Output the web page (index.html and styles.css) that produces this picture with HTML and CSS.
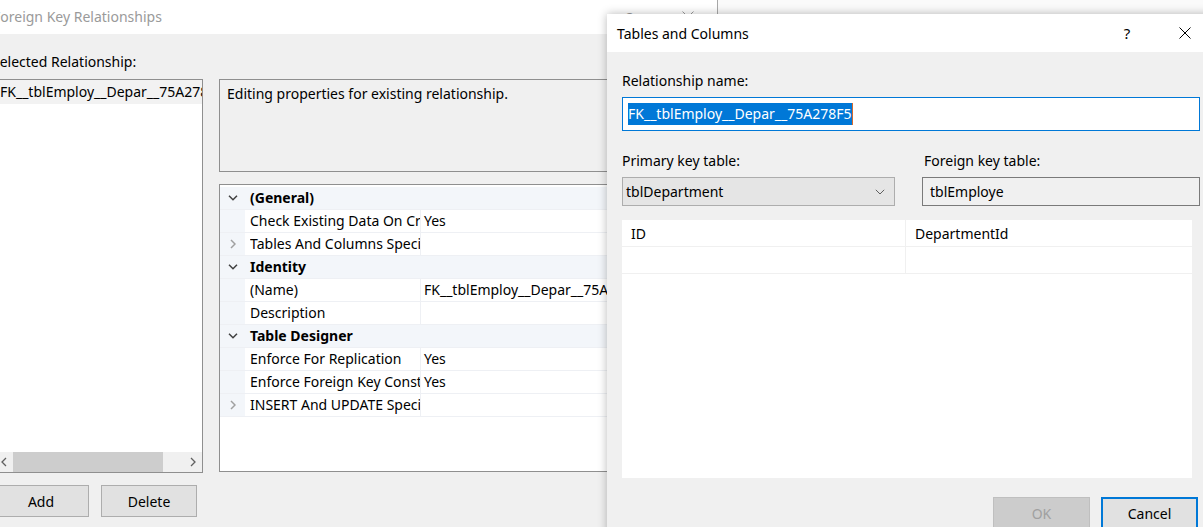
FILE: index.html
```html
<!DOCTYPE html>
<html>
<head>
<meta charset="utf-8">
<title>Foreign Key Relationships</title>
<link rel="stylesheet" href="styles.css">
</head>
<body>
<section class="win back">
  <header class="tb tb-back">
    <span class="tb-title">Foreign Key Relationships</span>
    <span class="capbtn">?</span>
    <span class="capbtn"><svg width="12" height="12" viewBox="0 0 12 12"><path d="M0.5 0.5L11.5 11.5M11.5 0.5L0.5 11.5" stroke="#9a9a9a" stroke-width="1" fill="none"/></svg></span>
  </header>
  <div class="back-body">
    <div class="lbl">Selected Relationship:</div>
    <div class="back-main">
      <div class="list">
        <div class="list-items">
          <div class="list-item">FK__tblEmploy__Depar__75A278F5</div>
        </div>
        <div class="hscroll">
          <span class="sarr"><svg width="6" height="10" viewBox="0 0 6 10"><path d="M5 1L1 5L5 9" stroke="#606060" stroke-width="1.3" fill="none"/></svg></span>
          <div class="track"><div class="thumb"></div></div>
          <span class="sarr"><svg width="6" height="10" viewBox="0 0 6 10"><path d="M1 1L5 5L1 9" stroke="#606060" stroke-width="1.3" fill="none"/></svg></span>
        </div>
      </div>
      <div class="rightcol">
        <div class="desc">Editing properties for existing relationship.</div>
        <div class="pgrid">
          <div class="prow cat"><span class="gut"><svg width="10" height="6" viewBox="0 0 10 6"><path d="M1 0.8L5 4.8L9 0.8" stroke="#404040" stroke-width="1.5" fill="none"/></svg></span><span class="pname">(General)</span></div>
          <div class="prow"><span class="gut"></span><span class="pname"><span class="clip">Check Existing Data On Creation Or Re-Enabling</span></span><span class="pval">Yes</span></div>
          <div class="prow"><span class="gut"><svg width="6" height="10" viewBox="0 0 6 10"><path d="M1 1L5 5L1 9" stroke="#a0a0a0" stroke-width="1.5" fill="none"/></svg></span><span class="pname"><span class="clip">Tables And Columns Specification</span></span><span class="pval"></span></div>
          <div class="prow cat"><span class="gut"><svg width="10" height="6" viewBox="0 0 10 6"><path d="M1 0.8L5 4.8L9 0.8" stroke="#404040" stroke-width="1.5" fill="none"/></svg></span><span class="pname">Identity</span></div>
          <div class="prow"><span class="gut"></span><span class="pname">(Name)</span><span class="pval">FK__tblEmploy__Depar__75A278F5</span></div>
          <div class="prow"><span class="gut"></span><span class="pname">Description</span><span class="pval"></span></div>
          <div class="prow cat"><span class="gut"><svg width="10" height="6" viewBox="0 0 10 6"><path d="M1 0.8L5 4.8L9 0.8" stroke="#404040" stroke-width="1.5" fill="none"/></svg></span><span class="pname">Table Designer</span></div>
          <div class="prow"><span class="gut"></span><span class="pname">Enforce For Replication</span><span class="pval">Yes</span></div>
          <div class="prow"><span class="gut"></span><span class="pname"><span class="clip">Enforce Foreign Key Constraint</span></span><span class="pval">Yes</span></div>
          <div class="prow"><span class="gut"><svg width="6" height="10" viewBox="0 0 6 10"><path d="M1 1L5 5L1 9" stroke="#a0a0a0" stroke-width="1.5" fill="none"/></svg></span><span class="pname"><span class="clip">INSERT And UPDATE Specification</span></span><span class="pval"></span></div>
        </div>
      </div>
    </div>
    <div class="btnrow">
      <button class="btn">Add</button>
      <button class="btn">Delete</button>
      <button class="btn btn-close">Close</button>
    </div>
  </div>
</section>

<section class="win front">
  <header class="tb tb-front">
    <span class="tb-title">Tables and Columns</span>
    <span class="capbtn">?</span>
    <span class="capbtn"><svg width="12" height="12" viewBox="0 0 12 12"><path d="M0.5 0.5L11.5 11.5M11.5 0.5L0.5 11.5" stroke="#000" stroke-width="1" fill="none"/></svg></span>
  </header>
  <div class="front-body">
    <div class="lbl">Relationship name:</div>
    <div class="namebox"><span class="seltext">FK__tblEmploy__Depar__75A278F5</span><span class="caret"></span></div>
    <div class="keys">
      <div class="lbl">Primary key table:</div>
      <div class="lbl">Foreign key table:</div>
      <div class="combo"><span>tblDepartment</span><svg width="10" height="6" viewBox="0 0 10 6"><path d="M0.8 0.8L5 5L9.2 0.8" stroke="#606060" stroke-width="1" fill="none"/></svg></div>
      <div class="rofield">tblEmploye</div>
    </div>
    <div class="cgrid">
      <div class="crow"><div class="ccell c1">ID</div><div class="ccell c2">DepartmentId</div></div>
      <div class="crow"><div class="ccell c1"></div><div class="ccell c2"></div></div>
    </div>
    <div class="fbtns">
      <button class="btn btn-ok">OK</button>
      <button class="btn btn-cancel">Cancel</button>
    </div>
  </div>
</section>
</body>
</html>
```

FILE: styles.css
```css
* { box-sizing: border-box; margin: 0; padding: 0; }
html, body { width: 1203px; height: 527px; overflow: hidden; }
body {
  background: #fafafa;
  font-family: "Noto Sans", "Segoe UI", sans-serif;
  font-size: 14px;
  color: #000;
  position: relative;
}
.win { position: absolute; background: #f0f0f0; }

/* caption bars */
.tb { display: flex; align-items: center; background: #fff; }
.tb-title { flex: 1; white-space: nowrap; font-size: 14px; }
.capbtn {
  width: 58px; height: 100%;
  display: flex; align-items: center; justify-content: center;
  font-size: 15px;
}

/* background window */
.back { left: -16px; top: 0; width: 734px; height: 540px; border-right: 1px solid #a8a8a8; }
.tb-back { height: 34px; padding-left: 9px; color: #9a9a9a; }
.tb-back .tb-title { padding-bottom: 2px; }
.back-body { padding: 19px 8px 0 8px; }
.lbl { height: 18px; line-height: 18px; white-space: nowrap; }
.back-main { display: flex; gap: 16px; margin-top: 8px; height: 394px; }
.list {
  margin-left: 2px; width: 209px; height: 394px;
  background: #fff; border: 1px solid #8f8f8f;
  display: flex; flex-direction: column;
}
.list-items { flex: 1; overflow: hidden; }
.list-item {
  height: 24px; line-height: 24px; padding-left: 5px;
  background: #f2f2f2; white-space: nowrap; overflow: hidden;
}
.hscroll { height: 20px; display: flex; align-items: center; background: #f0f0f0; }
.sarr { width: 18px; height: 20px; display: flex; align-items: center; justify-content: center; }
.track { flex: 1; height: 20px; display: flex; align-items: stretch; }
.thumb { width: 150px; background: #cdcdcd; }

.rightcol { flex: 1; display: flex; flex-direction: column; gap: 12px; }
.desc {
  height: 93px; border: 1px solid #8f8f8f;
  padding: 4px 7px; line-height: 20px; white-space: nowrap;
}
.pgrid {
  height: 288px; border: 1px solid #8f8f8f; background: #fff;
  padding-top: 2px; overflow: hidden;
}
.prow { display: flex; height: 23px; border-bottom: 1px solid #eef0f4; }
.prow .gut {
  width: 25px; flex: none; background: #f3f6fa;
  display: flex; align-items: center; justify-content: center;
}
.prow .pname {
  width: 176px; flex: none; padding-left: 5px; line-height: 22px;
  white-space: nowrap; overflow: hidden; border-right: 1px solid #eef0f4;
}
.prow .pname .clip { display: block; width: 170px; overflow: hidden; }
.prow .pval { flex: 1; padding-left: 3px; line-height: 22px; white-space: nowrap; overflow: hidden; }
.prow.cat { background: #f3f6fa; }
.prow.cat .pname { font-weight: bold; border-right: none; }

.btnrow { display: flex; gap: 12px; margin-top: 12px; padding-left: 1px; }
.btn {
  font-family: inherit; font-size: 14px; color: #000;
  height: 32px; width: 96px;
  background: #e1e1e1; border: 1px solid #adadad;
}
.btn-close { margin-left: 400px; margin-top: 8px; }

/* front window */
.front {
  left: 607px; top: 14px; width: 607px; height: 530px;
  box-shadow: 0 0 9px rgba(0,0,0,0.28);
}
.tb-front { height: 38px; padding-left: 10px; }
.front-body { padding: 20px 14px 0 15px; }
.namebox {
  margin-top: 7px; height: 34px; border: 1px solid #0078d7; background: #fff;
  display: flex; align-items: center; padding-left: 5px;
}
.seltext { background: #0078d7; color: #fff; font-size: 14px; line-height: 22px; white-space: nowrap; }
.caret { width: 1px; height: 22px; background: #d86a2c; }
.keys {
  margin-top: 21px;
  display: grid; grid-template-columns: 273px 1fr; column-gap: 27px; row-gap: 7px;
}
.keys .lbl:nth-child(2) { padding-left: 2px; }
.combo {
  height: 29px; background: #e5e5e5; border: 1px solid #adadad;
  display: flex; align-items: center; justify-content: space-between;
  padding: 0 9px 0 3px;
}
.rofield {
  height: 29px; background: #f0f0f0; border: 1px solid #7a7a7a;
  display: flex; align-items: center; padding-left: 7px;
}
.cgrid { margin-top: 14px; margin-right: 8px; height: 258px; background: #fff; }
.crow { display: flex; height: 27px; border-bottom: 1px solid #f0f0f0; }
.ccell { line-height: 27px; padding-left: 9px; white-space: nowrap; }
.c1 { width: 284px; border-right: 1px solid #f0f0f0; }
.c2 { flex: 1; }
.fbtns { display: flex; justify-content: flex-end; gap: 11px; margin-top: 19px; margin-right: 2px; }
.btn-ok { width: 97px; background: #cccccc; border-color: #bfbfbf; color: #a0a0a0; }
.btn-cancel { width: 97px; border: 2px solid #0078d7; }
```
